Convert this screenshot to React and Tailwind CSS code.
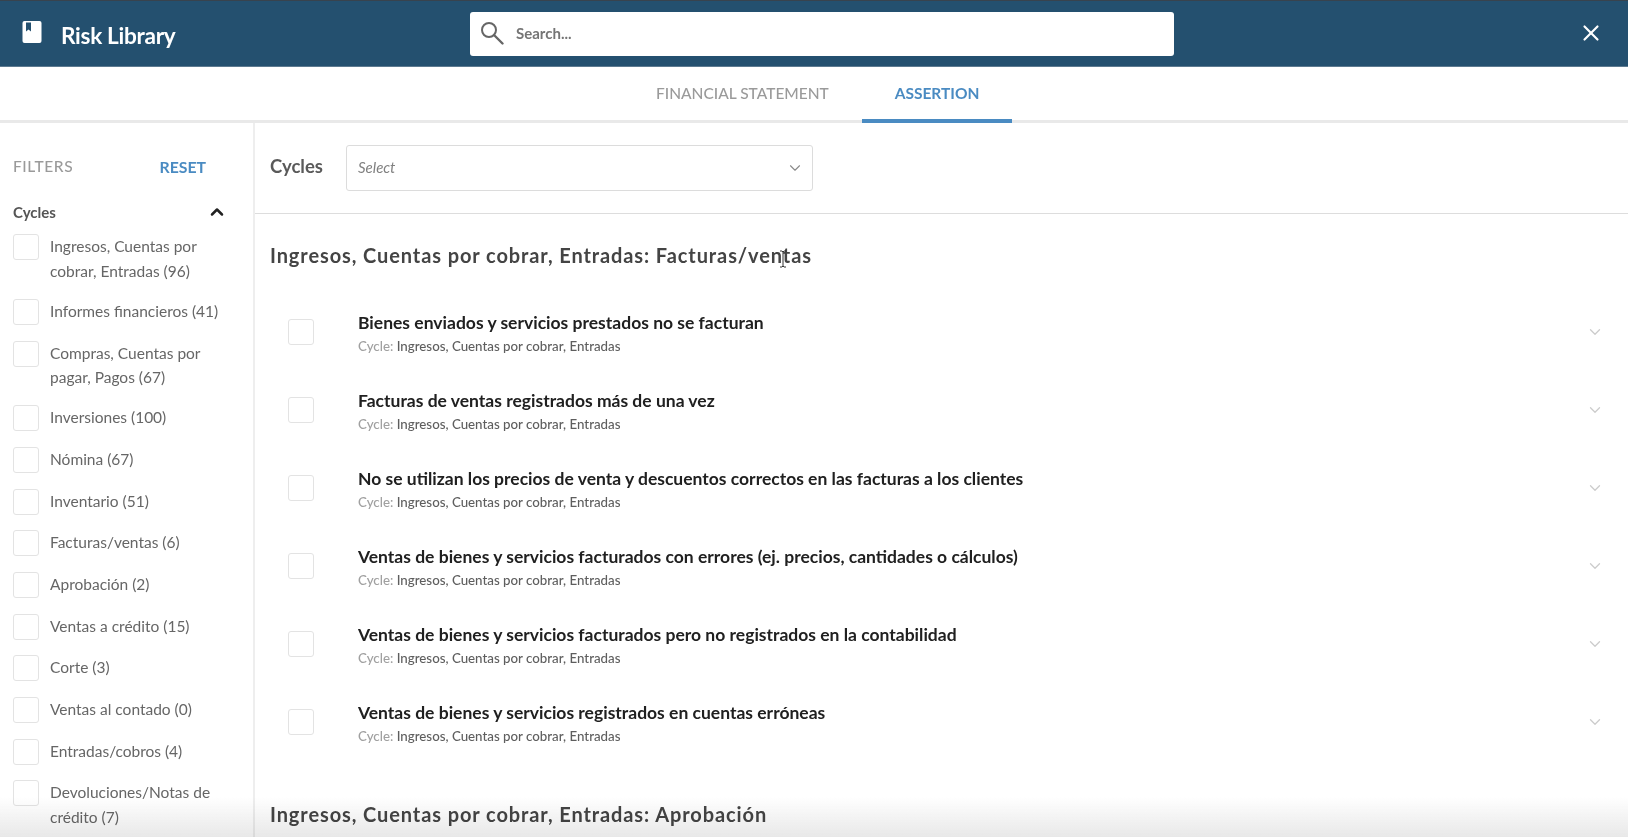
import React from "react";
import { X, ChevronDown, ChevronUp } from "lucide-react";

const cycles = [
  "Ingresos, Cuentas por cobrar, Entradas (96)",
  "Informes financieros (41)",
  "Compras, Cuentas por pagar, Pagos (67)",
  "Inversiones (100)",
  "Nómina (67)",
  "Inventario (51)",
  "Facturas/ventas (6)",
  "Aprobación (2)",
  "Ventas a crédito (15)",
  "Corte (3)",
  "Ventas al contado (0)",
  "Entradas/cobros (4)",
  "Devoluciones/Notas de crédito (7)",
];

const risks = [
  "Bienes enviados y servicios prestados no se facturan",
  "Facturas de ventas registrados más de una vez",
  "No se utilizan los precios de venta y descuentos correctos en las facturas a los clientes",
  "Ventas de bienes y servicios facturados con errores (ej. precios, cantidades o cálculos)",
  "Ventas de bienes y servicios facturados pero no registrados en la contabilidad",
  "Ventas de bienes y servicios registrados en cuentas erróneas",
];

const Box = () => (
  <span className="block w-[26px] h-[26px] shrink-0 rounded-[3px] border border-[#e3e3e3] bg-white"></span>
);

const App = () => {
  return (
    <div className="relative h-screen overflow-hidden bg-white font-['Lato','Open_Sans',sans-serif]">
      <header className="h-[67px] flex items-center border-t border-[#38434e] border-b-[#5d7a90] border-b bg-[#24506f] pl-[22px] pr-[24px]">
        <svg width="20" height="22" viewBox="0 0 20 22" className="mb-[3px] shrink-0">
          <rect x="0.5" y="0" width="19" height="22" rx="2" fill="#fff" />
          <path d="M4 1.5h5v9l-2.5-2-2.5 2z" fill="#24506f" />
        </svg>
        <h1 className="w-[409px] ml-[19px] pt-[4px] text-[22.6px] font-bold tracking-[-0.3px] text-white">Risk Library</h1>
        <div className="w-[704px] h-[44px] flex items-center rounded-[3px] bg-white pl-[10px]">
          <svg width="24" height="24" viewBox="0 0 24 24" className="shrink-0 mb-[2px]">
            <circle cx="9" cy="9" r="7" fill="none" stroke="#666666" strokeWidth="2" />
            <path d="M14 14l8.5 8.5" fill="none" stroke="#666666" strokeWidth="2.4" strokeLinecap="round" />
          </svg>
          <span className="ml-[12px] text-[15px] font-bold text-[#757575]">Search...</span>
        </div>
        <X size={26} strokeWidth={2} className="ml-auto mb-[1px] text-white" />
      </header>

      <nav className="h-[56px] flex pl-[656px] border-b-[3px] border-[#e9e9e9]">
        <div className="w-[172px] h-[56px] flex items-center whitespace-nowrap mr-[34px] pb-[3px] text-[15.5px] font-medium text-[#9a9a9a]">
          FINANCIAL STATEMENT
        </div>
        <div className="w-[150px] h-[56px] flex items-center justify-center pt-[1px] border-b-[4px] border-[#4a8bc2] text-[15.5px] font-bold text-[#4a8bc2]">
          ASSERTION
        </div>
      </nav>

      <div className="flex h-[714px]">
        <aside className="w-[255px] shrink-0 border-r-[2px] border-[#eeeeee] pl-[13px] pr-[24px] pt-[32px]">
          <div className="flex items-center justify-between pr-[23px]">
            <span className="text-[15.5px] font-medium tracking-[0.6px] text-[#9a9a9a]">FILTERS</span>
            <span className="text-[15.8px] font-bold text-[#4a8bc2]">RESET</span>
          </div>
          <div className="flex items-center justify-between mt-[22px] pr-[2px]">
            <span className="text-[15px] font-bold text-[#555555]">Cycles</span>
            <ChevronUp size={20} strokeWidth={3} className="text-[#222222]" />
          </div>
          <ul className="flex flex-col gap-[15.7px] mt-[11px]">
            {cycles.map((c) => (
              <li key={c} className="flex gap-[11px]">
                <Box />
                <span className="text-[15.5px] leading-[24.5px] text-[#666666]">{c}</span>
              </li>
            ))}
          </ul>
        </aside>

        <main className="flex-1 min-w-0">
          <div className="h-[91px] flex items-center border-b border-[#dddddd] pl-[15px] pb-[1px]">
            <span className="w-[76px] text-[18.5px] font-bold text-[#5a5a5a] pb-[1px]">Cycles</span>
            <div className="w-[467px] h-[46px] flex items-center justify-between rounded-[3px] border border-[#dcdcdc] pl-[11px] pr-[8px]">
              <span className="text-[15px] italic text-[#808080]">Select</span>
              <ChevronDown size={18} strokeWidth={1.5} className="text-[#8a8a8a]" />
            </div>
          </div>

          <section className="pl-[15px] pt-[29px]">
            <h2 className="text-[20px] leading-[24px] font-bold tracking-[0.9px] text-[#444444]">
              Ingresos, Cuentas por cobrar, Entradas: Facturas/ventas
            </h2>
            <ul className="mt-[26px]">
              {risks.map((r) => (
                <li key={r} className="h-[78px] flex items-center pl-[18px] pr-[24px]">
                  <Box />
                  <div className="ml-[44px] flex-1 pt-[3px]">
                    <p className="text-[17.5px] leading-[24px] font-bold text-[#202020]">{r}</p>
                    <p className="text-[13.3px] leading-[22px] font-medium text-[#5e5e5e]">
                      <span className="text-[#a0a0a0]">Cycle:</span> Ingresos, Cuentas por cobrar, Entradas
                    </p>
                  </div>
                  <ChevronDown size={18} strokeWidth={1.75} className="text-[#cccccc]" />
                </li>
              ))}
            </ul>
            <h2 className="mt-[41px] text-[20px] leading-[24px] font-bold tracking-[0.9px] text-[#444444]">
              Ingresos, Cuentas por cobrar, Entradas: Aprobación
            </h2>
          </section>
        </main>
      </div>

      {/* text cursor over the first heading */}
      <svg width="8" height="18" viewBox="0 0 8 18" className="absolute left-[779px] top-[250px]">
        <path d="M1 1h2l1 1 1-1h2M4 2v14M1 17h2l1-1 1 1h2" fill="none" stroke="#333" strokeWidth="1" />
      </svg>
      {/* fade at the bottom of the scroll area */}
      <div className="absolute inset-x-0 bottom-0 h-[40px] bg-gradient-to-b from-transparent to-[#e8e8e8] mix-blend-multiply pointer-events-none"></div>
    </div>
  );
};

export default App;
